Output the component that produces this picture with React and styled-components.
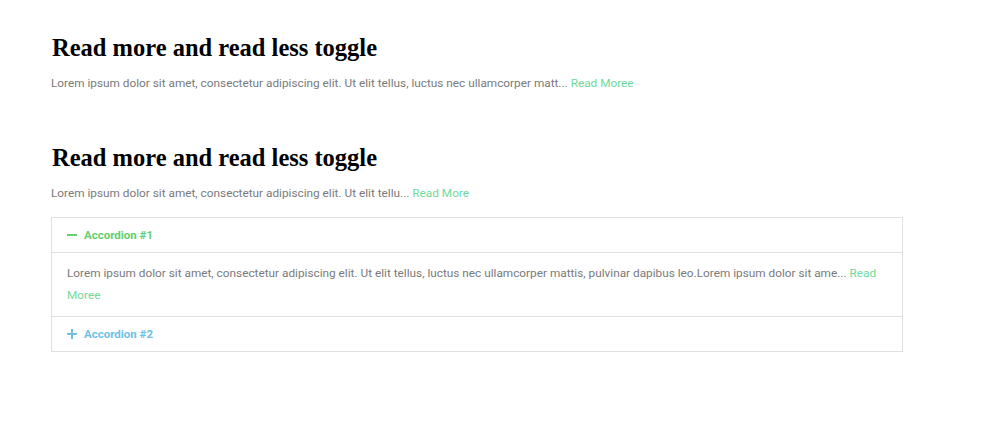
import React, { useState } from "react";
import styled, { createGlobalStyle } from "styled-components";

const Global = createGlobalStyle`
  html, body { margin: 0; padding: 0; background: #fff; }
  body { font-family: Roboto, "Liberation Sans", sans-serif; }
`;

const Page = styled.div`
  width: 852px;
  padding: 31px 0 0 51px;
  display: flex;
  flex-direction: column;
`;

const Section = styled.section`
  display: flex;
  flex-direction: column;
  margin-bottom: ${(p) => p.$mb || 0}px;
`;

const Heading = styled.h2`
  margin: 0;
  padding-left: 1px;
  font-family: "Liberation Serif", "DejaVu Serif", serif;
  font-weight: 700;
  font-size: 24.5px;
  line-height: 34px;
  color: #000;
`;

const Text = styled.p`
  margin: ${(p) => p.$mt || 0}px 0 0;
  font-size: 11.8px;
  line-height: 22px;
  color: #7a7a7a;
`;

const More = styled.a`
  color: #6fd99c;
  text-decoration: none;
  cursor: pointer;
`;

const Accordion = styled.div`
  margin-top: 13px;
  border: 1px solid #e0e0e0;
  display: flex;
  flex-direction: column;
`;

const Title = styled.div`
  display: flex;
  align-items: center;
  gap: 7px;
  height: 34px;
  padding: 0 15px;
  font-size: 11.5px;
  font-weight: 700;
  color: ${(p) => (p.$active ? "#61ce70" : "#6ec1e4")};
  border-top: ${(p) => (p.$first ? "none" : "1px solid #e0e0e0")};
  cursor: pointer;
`;

const Content = styled.div`
  border-top: 1px solid #e0e0e0;
  padding: 9px 15px 10px;
  font-size: 11.8px;
  line-height: 22px;
  color: #7a7a7a;
`;

const Icon = ({ plus, color }) => (
  <svg width="10" height="10" viewBox="0 0 10 10">
    <rect x="0" y="4" width="10" height="2" fill={color} />
    {plus && <rect x="4" y="0" width="2" height="10" fill={color} />}
  </svg>
);

export default function App() {
  const [open, setOpen] = useState(0);
  return (
    <>
      <Global />
      <Page>
        <Section $mb={47}>
          <Heading>Read more and read less toggle</Heading>
          <Text $mt={7}>
            Lorem ipsum dolor sit amet, consectetur adipiscing elit. Ut elit tellus, luctus nec ullamcorper matt... <More>Read Moree</More>
          </Text>
        </Section>
        <Section>
          <Heading>Read more and read less toggle</Heading>
          <Text $mt={7}>
            Lorem ipsum dolor sit amet, consectetur adipiscing elit. Ut elit tellu... <More>Read More</More>
          </Text>
          <Accordion>
            <Title $first $active={open === 0} onClick={() => setOpen(open === 0 ? -1 : 0)}>
              <Icon plus={open !== 0} color={open === 0 ? "#61ce70" : "#6ec1e4"} />
              Accordion #1
            </Title>
            {open === 0 && (
              <Content>
                Lorem ipsum dolor sit amet, consectetur adipiscing elit. Ut elit tellus, luctus nec ullamcorper mattis, pulvinar dapibus leo.Lorem ipsum dolor sit ame... <More>Read Moree</More>
              </Content>
            )}
            <Title $active={open === 1} onClick={() => setOpen(open === 1 ? -1 : 1)}>
              <Icon plus={open !== 1} color={open === 1 ? "#61ce70" : "#6ec1e4"} />
              Accordion #2
            </Title>
            {open === 1 && (
              <Content>
                Lorem ipsum dolor sit amet, consectetur adipiscing elit. Ut elit tellus, luctus nec ullamcorper mattis, pulvinar dapibus leo.
              </Content>
            )}
          </Accordion>
        </Section>
      </Page>
    </>
  );
}
